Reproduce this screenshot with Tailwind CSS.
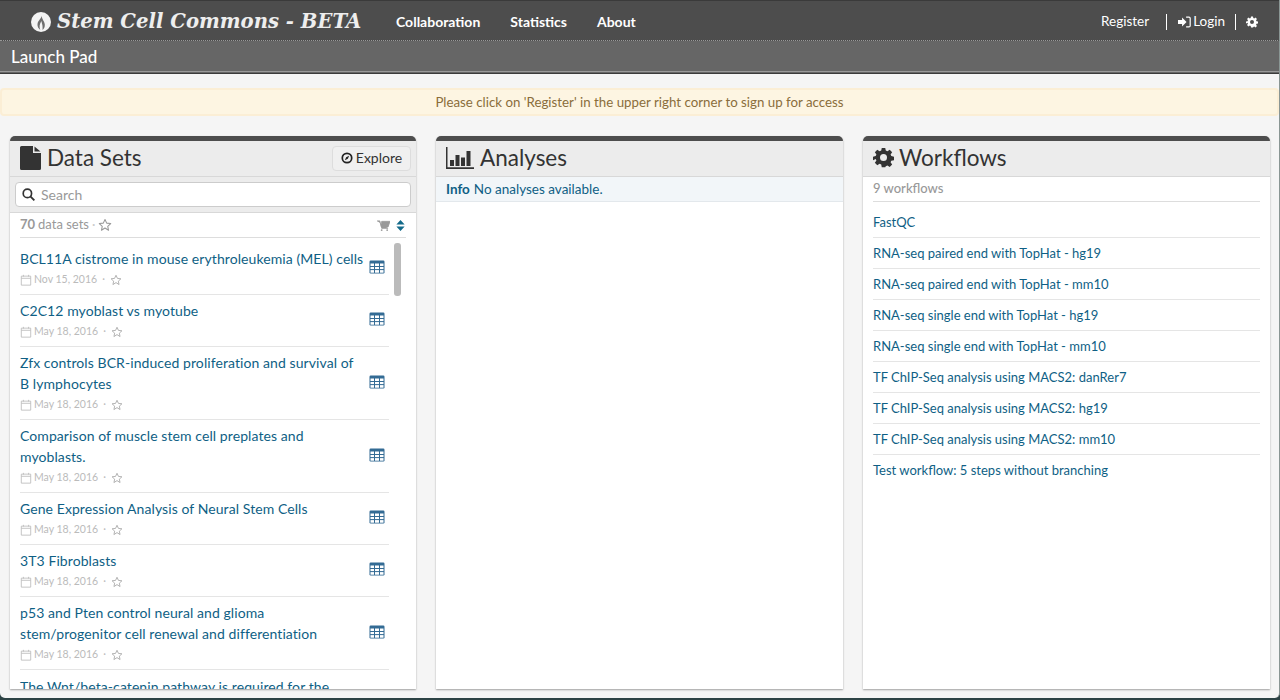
<!DOCTYPE html>
<html lang="en">
<head>
<meta charset="UTF-8">
<title>Stem Cell Commons</title>
<script src="https://cdn.jsdelivr.net/npm/@tailwindcss/browser@4"></script>
</head>
<body class="bg-[#2d4345] h-[700px] overflow-hidden font-['Lato','Noto_Sans',sans-serif] text-[14px] text-[#333]">
<svg class="hidden">
  <symbol id="star" viewBox="0 0 24 24"><path d="M12 2.500l2.900 6.300 6.900.8-5.100 4.700 1.400 6.800L12 17.200l-6.100 3.900 1.400-6.800L2.200 9.600l6.900-.8z" fill="none" stroke="currentColor" stroke-width="1.800" stroke-linejoin="round"/></symbol>
  <symbol id="cal" viewBox="0 0 14 14"><path d="M1.500 2.500h11v10.500h-11z M1.500 5h11 M4 1v2 M10 1v2" fill="none" stroke="currentColor" stroke-width="1"/></symbol>
  <symbol id="table" viewBox="0 0 16 14"><rect x="0.500" y="0.500" width="15" height="13" rx="1.200" fill="#336b94"/><path d="M1.500 3.500h13v9.200h-13z" fill="#fff"/><path d="M1 6.500h14M1 9.600h14M5.500 3v10M10.500 3v10" stroke="#336b94" stroke-width="1"/></symbol>
  <symbol id="gear" viewBox="0 0 24 24"><path fill-rule="evenodd" fill="currentColor" d="M10 1h4l.6 3.100 1.900.8L19.100 3.100l2.800 2.800-1.800 2.600.8 1.900 3.100.6v4l-3.100.6-.8 1.900 1.800 2.600-2.800 2.800-2.600-1.800-1.900.8L14 23h-4l-.6-3.100-1.900-.8-2.600 1.800-2.800-2.800 1.800-2.600-.8-1.900L0 15v-4l3.100-.6.8-1.900-1.800-2.600 2.800-2.800 2.600 1.800 1.900-.8zM12 8a4 4 0 1 0 0 8 4 4 0 0 0 0-8z"/></symbol>
</svg>

<div class="h-[698px] bg-[#f5f5f5] rounded-b-[5px] overflow-hidden border-r border-[#8a9694]">
<div class="h-[74px] -mr-px border-y border-[#3a3a3a] bg-[#666]">
  <div class="h-[40px] pt-[2px] bg-[#4d4d4d] border-b border-dotted border-[#999] flex items-center text-white">
    <svg viewBox="0 0 20 20" class="ml-[31px] w-[20px] h-[20px]">
      <circle cx="10" cy="10" r="10" fill="#f4f4f4"/>
      <path d="M10.500 2.500C11.500 6 7 8 6.500 12c-.3 2.500 1 4.500 2.800 6C8 15 8.500 12 10.500 9c.2 2.500 1.500 4 1 9 1.500-1.200 2.500-3 2.300-5.500-.3-3.500-3.300-5.500-3.300-10z" fill="#6e6e6e"/>
      <path d="M10.300 11.500c-.8 2-.7 4 0 6.500.6-2 .7-4.500 0-6.500z" fill="#f4f4f4"/>
    </svg>
    <div class="ml-[6px] w-[305px] font-['DejaVu_Serif',serif] font-bold italic text-[19.65px] text-[#eee] whitespace-nowrap">Stem Cell Commons - BETA</div>
    <nav class="ml-[34px] mb-[1px] flex gap-[30px] font-bold text-[14px]">
      <span>Collaboration</span>
      <span>Statistics</span>
      <span>About</span>
    </nav>
    <div class="ml-auto mr-[22px] flex items-center text-[13.5px]">
      <span>Register</span>
      <span class="ml-[17px] w-px h-[16px] bg-white"></span>
      <svg viewBox="0 0 16 14" class="ml-[11px] w-[13px] h-[12px]"><path d="M0 4.500h5V1.500l5.500 5.500L5 12.500v-3H0z" fill="#fff"/><path d="M10 1h3.500A1.500 1.500 0 0 1 15 2.500v9a1.500 1.500 0 0 1-1.500 1.500H10" fill="none" stroke="#fff" stroke-width="1.500"/></svg>
      <span class="ml-[2px]">Login</span>
      <span class="ml-[10px] w-px h-[16px] bg-white"></span>
      <svg class="ml-[10px] w-[12px] h-[12px] text-white"><use href="#gear"/></svg>
    </div>
  </div>
  <div class="h-[31px] pt-[1px] pl-[11px] flex items-center text-white text-[17px] font-medium bg-[#666] border-b border-[#999]">Launch Pad</div>
</div>

<div class="mt-[14px] h-[28px] pt-[1px] bg-[#fdf5e2] border-2 border-[#fbeed5] rounded-[4px] flex items-center justify-center text-[#8a6d3b] text-[13.3px]">Please click on 'Register' in the upper right corner to sign up for access</div>

<div class="mt-[20px] pl-[10px] flex gap-[20px] h-[553px]">

  <section class="w-[406px] bg-white rounded-t-[5px] border-t-[5px] border-[#4d4d4d] shadow-[0_1px_2px_rgba(0,0,0,0.35)] flex flex-col overflow-hidden">
    <div class="h-[36px] shrink-0 bg-[#ececec] border-b border-[#d8d8d8] pl-[10px] pr-[5px] flex items-center">
      <svg viewBox="0 0 21 24" class="w-[21px] h-[24px] mb-[2px] text-[#333]"><path d="M1.500 0H13v7h8v15.500a1.500 1.500 0 0 1-1.500 1.500h-18A1.500 1.500 0 0 1 0 22.500v-21A1.500 1.500 0 0 1 1.500 0zM14.500 0.500L20.500 5.500h-6z" fill="currentColor"/></svg>
      <span class="ml-[6px] mb-[1px] text-[22.5px] leading-none">Data Sets</span>
      <button class="ml-auto w-[79px] h-[25px] mb-[1px] pb-[1px] rounded-[4px] border border-[#ddd] bg-[#f0f0f0] flex items-center justify-center text-[14px]">
        <svg viewBox="0 0 14 14" class="w-[12px] h-[12px] mr-[3px]"><circle cx="7" cy="7" r="5.500" fill="none" stroke="#222" stroke-width="2"/><path d="M9.500 4.500L8 8 4.500 9.500 6 6z" fill="#222"/></svg>Explore
      </button>
    </div>
    <div class="h-[36px] shrink-0 bg-[#ececec] border-b border-[#d8d8d8] px-[5px] flex items-center">
      <div class="w-full h-[25px] bg-white rounded-[4px] border border-[#ccc] flex items-center pl-[6px] text-[#999] text-[14px]">
        <svg viewBox="0 0 14 14" class="w-[13px] h-[13px] mr-[6px]"><circle cx="5.800" cy="5.800" r="4.500" fill="none" stroke="#333" stroke-width="1.800"/><path d="M9 9l4.300 4.300" stroke="#333" stroke-width="2"/></svg>Search
      </div>
    </div>
    <div class="mx-[10px] h-[25px] shrink-0 border-b border-[#ddd] flex items-center text-[13px] text-[#999]">
      <b>70</b><span class="ml-[3px]">data sets</span><span class="ml-[3px] text-[#ccc]">·</span>
      <svg class="ml-[3px] w-[14px] h-[14px]"><use href="#star"/></svg>
      <svg viewBox="0 0 14 12" class="ml-auto w-[13px] h-[11px]"><path d="M0 1h3l1.500 6.500H12l2-6H5V9h7" fill="#999" stroke="#999"/><circle cx="5" cy="11" r="1" fill="#999"/><circle cx="11" cy="11" r="1" fill="#999"/></svg>
      <svg viewBox="0 0 9 12" class="ml-[6px] mr-[1px] w-[9px] h-[11px]"><path d="M4.500 0L9 5H0zM0 7h9l-4.500 5z" fill="#136a8a"/></svg>
    </div>
    <div class="relative flex-1 overflow-hidden pt-[5px] pl-[10px] pr-[27px]">
      <div class="absolute right-[15px] top-[5px] w-[7px] h-[53px] rounded-[3px] bg-[#bbb]"></div>

      <article class="h-[52px] border-b border-[#e5e5e5] flex items-center">
        <div class="flex-1 pb-[1px]"><a class="block text-[#0f5f85] text-[14px] leading-[21px] whitespace-nowrap tracking-[0.08px]">BCL11A cistrome in mouse erythroleukemia (MEL) cells</a>
        <div class="flex items-center pt-[2px] text-[#bbb] text-[10.5px] h-[20px]"><svg class="w-[12px] h-[12px] mr-[2px]"><use href="#cal"/></svg>Nov 15, 2016<span class="mx-[5px]">·</span><svg class="w-[12px] h-[12px] text-[#aaa]"><use href="#star"/></svg></div></div>
        <svg class="w-[16px] h-[14px] mb-[3px] mr-[4px]"><use href="#table"/></svg>
      </article>
      <article class="h-[52px] border-b border-[#e5e5e5] flex items-center">
        <div class="flex-1 pb-[1px]"><a class="block text-[#0f5f85] text-[14px] leading-[21px] tracking-[0.08px]">C2C12 myoblast vs myotube</a>
        <div class="flex items-center pt-[2px] text-[#bbb] text-[10.5px] h-[20px]"><svg class="w-[12px] h-[12px] mr-[2px]"><use href="#cal"/></svg>May 18, 2016<span class="mx-[5px]">·</span><svg class="w-[12px] h-[12px] text-[#aaa]"><use href="#star"/></svg></div></div>
        <svg class="w-[16px] h-[14px] mb-[3px] mr-[4px]"><use href="#table"/></svg>
      </article>
      <article class="h-[73px] border-b border-[#e5e5e5] flex items-center">
        <div class="flex-1 pb-[1px]"><a class="block text-[#0f5f85] text-[14px] leading-[21px] tracking-[0.08px]">Zfx controls BCR-induced proliferation and survival of<br>B lymphocytes</a>
        <div class="flex items-center pt-[2px] text-[#bbb] text-[10.5px] h-[20px]"><svg class="w-[12px] h-[12px] mr-[2px]"><use href="#cal"/></svg>May 18, 2016<span class="mx-[5px]">·</span><svg class="w-[12px] h-[12px] text-[#aaa]"><use href="#star"/></svg></div></div>
        <svg class="w-[16px] h-[14px] mb-[3px] mr-[4px]"><use href="#table"/></svg>
      </article>
      <article class="h-[73px] border-b border-[#e5e5e5] flex items-center">
        <div class="flex-1 pb-[1px]"><a class="block text-[#0f5f85] text-[14px] leading-[21px] tracking-[0.08px]">Comparison of muscle stem cell preplates and<br>myoblasts.</a>
        <div class="flex items-center pt-[2px] text-[#bbb] text-[10.5px] h-[20px]"><svg class="w-[12px] h-[12px] mr-[2px]"><use href="#cal"/></svg>May 18, 2016<span class="mx-[5px]">·</span><svg class="w-[12px] h-[12px] text-[#aaa]"><use href="#star"/></svg></div></div>
        <svg class="w-[16px] h-[14px] mb-[3px] mr-[4px]"><use href="#table"/></svg>
      </article>
      <article class="h-[52px] border-b border-[#e5e5e5] flex items-center">
        <div class="flex-1 pb-[1px]"><a class="block text-[#0f5f85] text-[14px] leading-[21px] tracking-[0.08px]">Gene Expression Analysis of Neural Stem Cells</a>
        <div class="flex items-center pt-[2px] text-[#bbb] text-[10.5px] h-[20px]"><svg class="w-[12px] h-[12px] mr-[2px]"><use href="#cal"/></svg>May 18, 2016<span class="mx-[5px]">·</span><svg class="w-[12px] h-[12px] text-[#aaa]"><use href="#star"/></svg></div></div>
        <svg class="w-[16px] h-[14px] mb-[3px] mr-[4px]"><use href="#table"/></svg>
      </article>
      <article class="h-[52px] border-b border-[#e5e5e5] flex items-center">
        <div class="flex-1 pb-[1px]"><a class="block text-[#0f5f85] text-[14px] leading-[21px] tracking-[0.08px]">3T3 Fibroblasts</a>
        <div class="flex items-center pt-[2px] text-[#bbb] text-[10.5px] h-[20px]"><svg class="w-[12px] h-[12px] mr-[2px]"><use href="#cal"/></svg>May 18, 2016<span class="mx-[5px]">·</span><svg class="w-[12px] h-[12px] text-[#aaa]"><use href="#star"/></svg></div></div>
        <svg class="w-[16px] h-[14px] mb-[3px] mr-[4px]"><use href="#table"/></svg>
      </article>
      <article class="h-[73px] border-b border-[#e5e5e5] flex items-center">
        <div class="flex-1 pb-[1px]"><a class="block text-[#0f5f85] text-[14px] leading-[21px] tracking-[0.08px]">p53 and Pten control neural and glioma<br>stem/progenitor cell renewal and differentiation</a>
        <div class="flex items-center pt-[2px] text-[#bbb] text-[10.5px] h-[20px]"><svg class="w-[12px] h-[12px] mr-[2px]"><use href="#cal"/></svg>May 18, 2016<span class="mx-[5px]">·</span><svg class="w-[12px] h-[12px] text-[#aaa]"><use href="#star"/></svg></div></div>
        <svg class="w-[16px] h-[14px] mb-[3px] mr-[4px]"><use href="#table"/></svg>
      </article>
      <a class="block mt-[6px] text-[#0f5f85] text-[14px] leading-[21px] tracking-[0.08px]">The Wnt/beta-catenin pathway is required for the</a>
    </div>
  </section>

  <section class="w-[407px] bg-white rounded-t-[5px] border-t-[5px] border-[#4d4d4d] shadow-[0_1px_2px_rgba(0,0,0,0.35)] flex flex-col">
    <div class="h-[36px] shrink-0 bg-[#ececec] border-b border-[#d8d8d8] px-[10px] flex items-center">
      <svg viewBox="0 0 28 22" class="w-[28px] h-[22px] mb-[2px] text-[#333]"><path d="M0 0h1.500v20.300H28V22H0z M4 13h4v6H4z M9.500 8h4v11h-4z M15 10.500h4V19h-4z M20.500 4h4v15h-4z" fill="currentColor"/></svg>
      <span class="ml-[6px] mb-[1px] text-[22.5px] leading-none">Analyses</span>
    </div>
    <div class="h-[25px] bg-[#f2f6f9] border-b border-[#e3e8ec] px-[10px] flex items-center text-[#0f5f85] text-[13.5px]"><b>Info</b><span class="ml-[4px]">No analyses available.</span></div>
  </section>

  <section class="w-[407px] bg-white rounded-t-[5px] border-t-[5px] border-[#4d4d4d] shadow-[0_1px_2px_rgba(0,0,0,0.35)] flex flex-col">
    <div class="h-[36px] shrink-0 bg-[#ececec] border-b border-[#d8d8d8] px-[10px] flex items-center">
      <svg class="w-[21px] h-[21px] mb-[2px] text-[#333]"><use href="#gear"/></svg>
      <span class="ml-[5px] mb-[1px] text-[22.5px] leading-none">Workflows</span>
    </div>
    <div class="mx-[10px] text-[13px]">
      <div class="h-[25px] border-b border-[#ddd] flex items-center text-[#999] font-medium">9 workflows</div>
      <a class="h-[36px] pt-[6px] border-b border-[#e5e5e5] flex items-center text-[#0f5f85]">FastQC</a>
      <a class="h-[31px] pt-[1px] border-b border-[#e5e5e5] flex items-center text-[#0f5f85]">RNA-seq paired end with TopHat - hg19</a>
      <a class="h-[31px] pt-[1px] border-b border-[#e5e5e5] flex items-center text-[#0f5f85]">RNA-seq paired end with TopHat - mm10</a>
      <a class="h-[31px] pt-[1px] border-b border-[#e5e5e5] flex items-center text-[#0f5f85]">RNA-seq single end with TopHat - hg19</a>
      <a class="h-[31px] pt-[1px] border-b border-[#e5e5e5] flex items-center text-[#0f5f85]">RNA-seq single end with TopHat - mm10</a>
      <a class="h-[31px] pt-[1px] border-b border-[#e5e5e5] flex items-center text-[#0f5f85]">TF ChIP-Seq analysis using MACS2: danRer7</a>
      <a class="h-[31px] pt-[1px] border-b border-[#e5e5e5] flex items-center text-[#0f5f85]">TF ChIP-Seq analysis using MACS2: hg19</a>
      <a class="h-[31px] pt-[1px] border-b border-[#e5e5e5] flex items-center text-[#0f5f85]">TF ChIP-Seq analysis using MACS2: mm10</a>
      <a class="h-[31px] flex items-center text-[#0f5f85]">Test workflow: 5 steps without branching</a>
    </div>
  </section>
</div>
</div>
</body>
</html>
